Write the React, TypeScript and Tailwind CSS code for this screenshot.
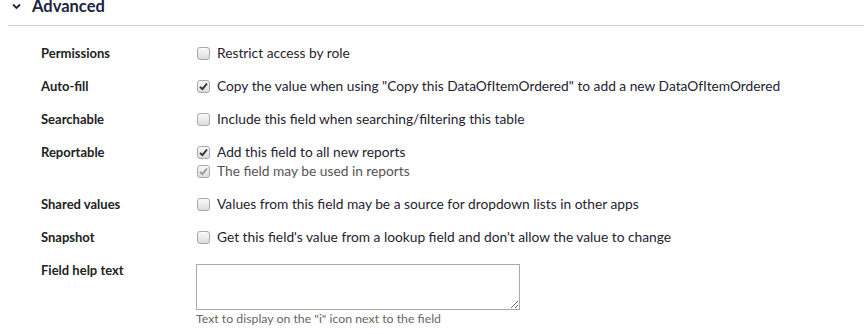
import React from "react";

function Box({ checked, disabled }: { checked?: boolean; disabled?: boolean }) {
  return (
    <span className="relative inline-flex h-[13px] w-[13px] shrink-0 items-center justify-center rounded-[3px] border border-[#a9a9a9] bg-gradient-to-b from-[#fafafa] to-[#dcdcdc]">
      {checked && (
        <svg width="9" height="9" viewBox="0 0 9 9">
          <path
            d="M1 4.8 L3.4 7.2 L8 1.5"
            fill="none"
            stroke={disabled ? "#9a9a9a" : "#333"}
            strokeWidth="1.9"
          />
        </svg>
      )}
    </span>
  );
}

function Row({ label, children }: { label: string; children: React.ReactNode }) {
  return (
    <div className="flex">
      <div className="w-[156px] shrink-0 text-[13px] font-bold leading-[19px] text-[#222]">{label}</div>
      <div className="flex flex-col gap-0">{children}</div>
    </div>
  );
}

function Opt({ text, checked, disabled }: { text: string; checked?: boolean; disabled?: boolean }) {
  return (
    <div className="flex h-[19px] items-center gap-[7px] text-[13.75px] text-[#1f2330]">
      <Box checked={checked} disabled={disabled} />
      <span className={disabled ? "text-[#555]" : ""}>{text}</span>
    </div>
  );
}

export default function App() {
  return (
    <div className="h-[334px] w-[864px] overflow-hidden bg-white" style={{ fontFamily: "Lato, 'Open Sans', sans-serif" }}>
      <div className="-mt-[5px] flex h-[22px] items-center pl-[12px]">
        <svg width="9" height="7" viewBox="0 0 9 7" className="mr-[11px]">
          <path d="M1 1.5 L4.5 5 L8 1.5" fill="none" stroke="#1b2440" strokeWidth="1.8" />
        </svg>
        <span className="text-[16.5px] font-bold text-[#1b2440]">Advanced</span>
      </div>
      <div className="ml-[8px] mt-[8px] h-px bg-[#cfcfcf]" />
      <div className="flex flex-col gap-[14px] pl-[41px] pt-[18px]">
        <Row label="Permissions">
          <Opt text="Restrict access by role" />
        </Row>
        <Row label="Auto-fill">
          <Opt checked text={'Copy the value when using "Copy this DataOfItemOrdered" to add a new DataOfItemOrdered'} />
        </Row>
        <Row label="Searchable">
          <Opt text="Include this field when searching/filtering this table" />
        </Row>
        <Row label="Reportable">
          <Opt checked text="Add this field to all new reports" />
          <Opt checked disabled text="The field may be used in reports" />
        </Row>
        <Row label="Shared values">
          <Opt text="Values from this field may be a source for dropdown lists in other apps" />
        </Row>
        <Row label="Snapshot">
          <Opt text="Get this field's value from a lookup field and don't allow the value to change" />
        </Row>
        <div className="flex">
          <div className="w-[155px] shrink-0 text-[13px] font-bold leading-[19px] text-[#222]">Field help text</div>
          <div className="flex flex-col pt-[3px]">
            <textarea className="block h-[46px] w-[324px] resize border border-[#a9a9a9] bg-white" />
            <div className="mt-[1px] text-[12.3px] leading-[16px] text-[#666]">Text to display on the "i" icon next to the field</div>
          </div>
        </div>
      </div>
    </div>
  );
}
